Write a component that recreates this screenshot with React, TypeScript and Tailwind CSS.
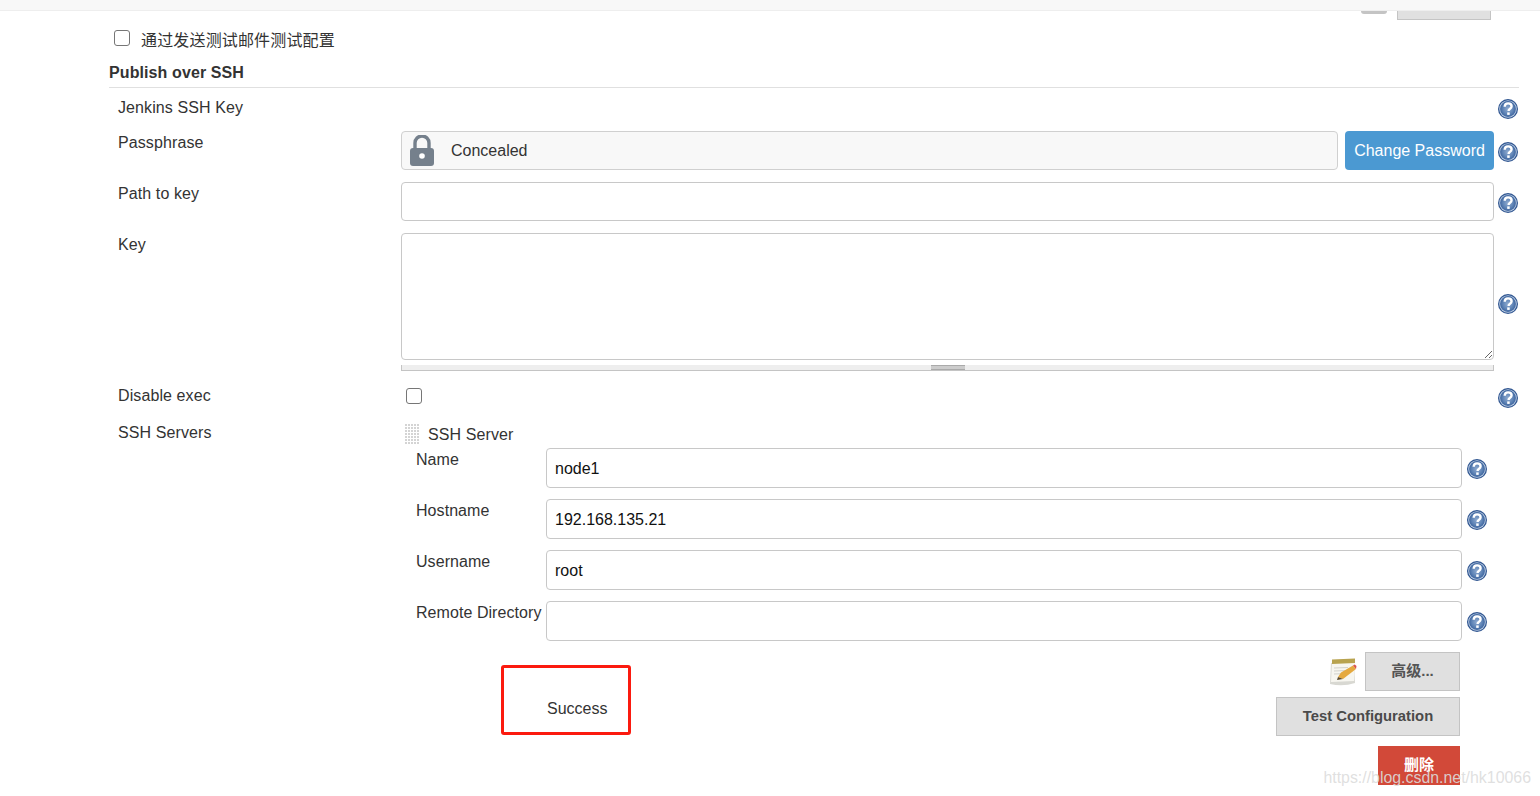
import React from "react";

const FONT = "[font-family:'Liberation_Sans','Noto_Sans_CJK_SC',sans-serif]";

function Help({ className = "" }: { className?: string }) {
  return (
    <svg width="20" height="20" viewBox="0 0 20 20" className={`shrink-0 ${className}`}>
      <defs>
        <radialGradient id="helpfill" cx="50%" cy="50%" r="55%">
          <stop offset="0%" stopColor="#8fabd0" />
          <stop offset="60%" stopColor="#5f84b6" />
          <stop offset="100%" stopColor="#345c98" />
        </radialGradient>
      </defs>
      <circle cx="10" cy="10" r="10" fill="#2f5590" />
      <circle cx="10" cy="10" r="8.8" fill="#b9cbe2" />
      <circle cx="10" cy="10" r="7.9" fill="url(#helpfill)" />
      <path d="M6.700 7.700C6.800 5.500 8.300 4.400 10.100 4.400c2 0 3.500 1.200 3.500 2.900 0 1.400-.9 2.100-1.800 2.700-.9.600-1.200 1-1.200 2" fill="none" stroke="#fff" strokeWidth="2.400" />
      <rect x="9.200" y="13.400" width="2.500" height="2.500" fill="#fff" />
    </svg>
  );
}

function Lock() {
  return (
    <svg width="24" height="31" viewBox="0 0 24 31" className="shrink-0">
      <path d="M5 14V8a7 7 0 0 1 14 0V14" fill="none" stroke="#75808c" strokeWidth="3.400" />
      <rect x="0" y="13" width="24" height="18" rx="3" fill="#75808c" />
      <circle cx="12" cy="21" r="2.800" fill="#fff" />
    </svg>
  );
}

function Notepad() {
  return (
    <svg width="28" height="28" viewBox="0 0 28 28" className="shrink-0">
      <path d="M2 5L25 3 26 25Q14 29 1 26Z" fill="#d8d8d2" />
      <path d="M3 4L26 2 25 23 2 24Z" fill="#f7f6f0" />
      <path d="M3 1.500L26 0.500 26 5 3 6Z" fill="#b8a34f" />
      <path d="M5 10l14-.5M5 13l11-.4M5 16l8-.3" stroke="#d2d2cc" strokeWidth="1" />
      <path d="M9 19l3-4.500L24 7.500l3 3.500L14 21z" fill="#e5a93f" />
      <path d="M24 7.500l1.800-1 1.700 1.500-.5 3z" fill="#d9534f" />
      <path d="M8 22l1-3 5 2z" fill="#5b4a2c" />
    </svg>
  );
}

function Grip() {
  return (
    <div className="grid grid-cols-[repeat(5,3px)] auto-rows-[3px] mt-[3px] w-[15px]">
      {Array.from({ length: 35 }).map((_, i) => (
        <span key={i} className="w-[2px] h-[2px] bg-[#d4d4d4]" />
      ))}
    </div>
  );
}

const fieldCls =
  "block w-full bg-white border border-[#c8c8c8] rounded-[4px] px-2 text-[16px] text-[#111] outline-none";

function Row({ label, top = "", children }: { label: string; top?: string; children: React.ReactNode }) {
  return (
    <div className={`flex items-start ${top}`}>
      <div className="w-[292px] shrink-0 pl-[9px] pt-[2px] leading-[20px] tracking-[0.1px]">{label}</div>
      {children}
    </div>
  );
}

function ServerRow({ label, value }: { label: string; value: string }) {
  return (
    <div className="flex items-start mb-[11px] pl-[15px]">
      <div className="w-[130px] shrink-0 pt-[2px] leading-[20px] tracking-[0.06px] whitespace-nowrap">{label}</div>
      <div className="w-[916px] h-[40px] shrink-0">
        <input readOnly value={value} className={`${fieldCls} h-full pt-[2px] ${FONT}`} />
      </div>
      <Help className="ml-[5px] mt-[11px]" />
    </div>
  );
}

export default function App() {
  return (
    <div className={`relative h-[796px] overflow-hidden bg-white text-[16px] text-[#333] ${FONT}`}>
      <div className="h-[11px] bg-[#f8f8f8] border-b border-[#eeeeee]" />
      <div className="h-[9px] flex justify-end items-start pr-[49px] gap-[10px]">
        <div className="w-[26px] h-[3px] bg-[#c4c4c4] rounded-b-[3px]" />
        <div className="w-[94px] h-[9px] bg-[#e0e0e0] border-x border-b border-[#c4c4c4]" />
      </div>

      <div className="mt-[10px] ml-[114px] flex items-start h-[20px]">
        <input type="checkbox" className="appearance-none w-4 h-4 m-0 border border-[#767676] rounded-[3px] bg-white" />
        <span className="ml-[11px] pt-[1px] leading-[20px] text-[16px] tracking-[0.16px]">通过发送测试邮件测试配置</span>
      </div>

      <div className="ml-[109px] w-[1410px]">
        <div className="mt-[12px] h-[26px] pt-[1px] pb-[4px] border-b border-[#e0e0e0] font-bold leading-[20px] tracking-[0.1px]">Publish over SSH</div>

        <Row label="Jenkins SSH Key" top="mt-[8px]">
          <div className="w-[1097px] shrink-0" />
          <Help className="mt-[3px]" />
        </Row>

        <Row label="Passphrase" top="mt-[12px]">
          <div className="w-[937px] h-[39px] shrink-0 flex items-center pl-[8px] bg-[#f8f8f8] border border-[#d0d0d0] rounded-[4px]">
            <Lock />
            <span className="ml-[17px]">Concealed</span>
          </div>
          <button className={`ml-[7px] w-[149px] h-[39px] shrink-0 bg-[#4b99d2] text-white rounded-[4px] text-[16px] ${FONT}`}>
            Change Password
          </button>
          <Help className="ml-[4px] mt-[11px]" />
        </Row>

        <Row label="Path to key" top="mt-[12px]">
          <div className="w-[1093px] h-[39px] shrink-0">
            <input readOnly className={`${fieldCls} h-full ${FONT}`} />
          </div>
          <Help className="ml-[4px] mt-[11px]" />
        </Row>

        <Row label="Key" top="mt-[12px]">
          <div className="w-[1093px] shrink-0">
            <textarea readOnly className={`${fieldCls} h-[127px] resize-y ${FONT}`} />
            <div className="mt-[5px] h-[6px] bg-[#eeeeee] border-x border-b border-[#c4c4c4] flex justify-center">
              <div className="w-[34px] h-[5px] border-y border-[#aaaaaa] bg-[#cccccc]" />
            </div>
          </div>
          <Help className="ml-[4px] mt-[61px]" />
        </Row>

        <Row label="Disable exec" top="mt-[13px]">
          <div className="w-[1093px] shrink-0 pl-[5px] pt-[4px]">
            <input type="checkbox" className="block appearance-none w-4 h-4 m-0 border border-[#767676] rounded-[3px] bg-white" />
          </div>
          <Help className="ml-[4px] mt-[4px]" />
        </Row>

        <Row label="SSH Servers" top="mt-[13px]">
          <div className="w-[1118px] shrink-0">
            <div className="h-[27px] flex items-start pl-[4px]">
              <Grip />
              <span className="ml-[8px] mt-[4px] leading-[20px] tracking-[0.1px]">SSH Server</span>
            </div>
            <ServerRow label="Name" value="node1" />
            <ServerRow label="Hostname" value="192.168.135.21" />
            <ServerRow label="Username" value="root" />
            <ServerRow label="Remote Directory" value="" />

            <div className="flex items-start w-[1059px]">
              <div className="ml-[100px] mt-[13px] w-[130px] h-[70px] shrink-0 border-[3px] border-[#fb1a0f] rounded-[3px] pl-[43px] pt-[31px] leading-[20px]">
                Success
              </div>
              <div className="flex-1 flex flex-col items-end">
                <div className="flex items-start">
                  <div className="mt-[6px] mr-[8px]"><Notepad /></div>
                  <div className="w-[95px] h-[39px] bg-[#e0e0e0] border border-[#c4c4c4] flex items-center justify-center font-bold text-[15px] text-[#555]">
                    高级...
                  </div>
                </div>
                <div className="mt-[6px] w-[184px] h-[39px] bg-[#e0e0e0] border border-[#c4c4c4] flex items-center justify-center font-bold text-[14.800px] text-[#4a4a4a]">
                  Test Configuration
                </div>
                <div className="mt-[10px] w-[82px] h-[39px] bg-[#d24939] flex items-center justify-center font-bold text-[15px] text-white">
                  删除
                </div>
              </div>
            </div>
          </div>
        </Row>
      </div>

      <div className="absolute right-[9px] top-[768px] leading-[20px] text-[15.900px] text-[#dcdcdc]/90 whitespace-nowrap">
        https://blog.csdn.net/hk10066
      </div>
    </div>
  );
}
